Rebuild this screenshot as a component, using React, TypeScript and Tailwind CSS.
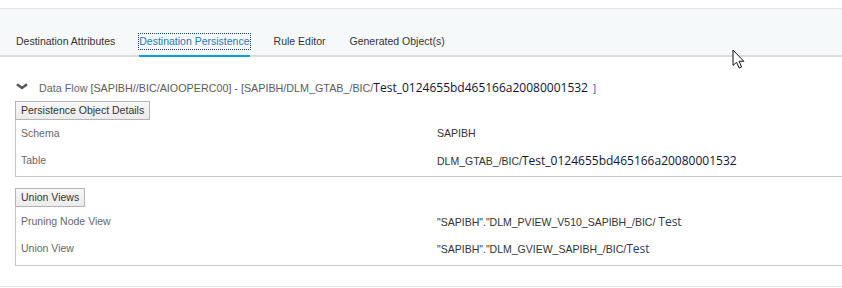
import React from "react";

const sans = "font-['Liberation_Sans',Arial,sans-serif]";
const testFont = "font-['Open_Sans','Noto_Sans',sans-serif] text-[12px]";

function Tab({ label, active }: { label: string; active?: boolean }) {
  return (
    <div
      className={
        "pb-[6px] border-b-2 " +
        (active ? "border-[#0a9ee0]" : "border-transparent")
      }
    >
      <span
        className={
          "block leading-[13px] px-[0px] py-[1px] " +
          (active
            ? "text-[#1e78b6] outline outline-1 outline-dotted outline-[#1a3f66] outline-offset-0"
            : "text-[#333]")
        }
      >
        {label}
      </span>
    </div>
  );
}

function SectionButton({ label }: { label: string }) {
  return (
    <button className="h-[19px] px-[5px] border border-[#b4b4b4] bg-gradient-to-b from-[#f8f8f8] to-[#ebebeb] text-[10.5px] leading-[17px] text-[#333]">
      {label}
    </button>
  );
}

function Row({ label, children }: { label: string; children: React.ReactNode }) {
  return (
    <div className="grid grid-cols-[416px_1fr] h-[27px] items-center">
      <div className="pl-[5px] text-[#666]">{label}</div>
      <div className="pl-[5px] text-[#333] whitespace-nowrap flex items-baseline">{children}</div>
    </div>
  );
}

function Cursor() {
  return (
    <svg
      className="absolute left-[732px] top-[49px]"
      width="14"
      height="21"
      viewBox="0 0 14 21"
    >
      <path
        d="M1 1 L1 16.5 L4.6 13.2 L7.2 19 L9.6 18 L7.1 12.3 L11.8 12.3 Z"
        fill="#fff"
        stroke="#111"
        strokeWidth="1"
        strokeLinejoin="miter"
      />
    </svg>
  );
}

export default function App() {
  return (
    <div className={"relative w-[842px] h-[288px] bg-white overflow-hidden text-[10.5px] " + sans}>
      <div className="h-2" />

      {/* tab strip */}
      <div className="h-[49px] border-t border-[#e4e4e4] border-b-2 border-b-[#dcdcdc] bg-[#f6f9fa] flex items-end">
        <div className="flex gap-6 pl-4 -mb-[2px]">
          <Tab label="Destination Attributes" />
          <Tab label="Destination Persistence" active />
          <Tab label="Rule Editor" />
          <Tab label="Generated Object(s)" />
        </div>
      </div>

      <div className="pl-[15px]">
        {/* data flow title */}
        <div className="mt-[23px] h-4 flex items-center">
          <svg className="ml-[1px] -mt-[4px]" width="12" height="7" viewBox="0 0 12 7">
            <path d="M1 1.2 L6 5 L11 1.2" fill="none" stroke="#555" strokeWidth="2.4" />
          </svg>
          <div className="ml-[11px] whitespace-nowrap flex items-baseline text-[10.75px] text-[#5c5c5c]">
            <span className="text-[#666]">Data Flow&nbsp;</span>
            <span>[SAPIBH//BIC/AIOOPERC00] - [SAPIBH/DLM_GTAB_/BIC/</span>
            <span className={testFont + " text-[#121236]"}>Test_0124655bd465166a20080001532</span>
            <span className="ml-[5px] text-[#2f6fb8] text-[11px]">]</span>
          </div>
        </div>

        {/* persistence object details */}
        <div className="mt-[5px]">
          <SectionButton label="Persistence Object Details" />
        </div>
        <div className="border-l border-b border-[#c9c9c9] pb-[2px]">
          <Row label="Schema">SAPIBH</Row>
          <Row label="Table">
            <span>DLM_GTAB_/BIC/</span>
            <span className={testFont + " text-[#121236]"}>Test_0124655bd465166a20080001532</span>
          </Row>
        </div>

        {/* union views */}
        <div className="mt-[11px]">
          <SectionButton label="Union Views" />
        </div>
        <div className="border-l border-b border-[#c9c9c9] pb-[3px]">
          <div className="h-[1px]" />
          <Row label="Pruning Node View">
            <span>"SAPIBH"."DLM_PVIEW_V510_SAPIBH_/BIC/&nbsp;</span>
            <span className={testFont + " text-[#243d66]"}>Test</span>
          </Row>
          <Row label="Union View">
            <span>"SAPIBH"."DLM_GVIEW_SAPIBH_/BIC/</span>
            <span className={testFont + " text-[#243d66]"}>Test</span>
          </Row>
        </div>
      </div>

      <div className="mt-[20px] border-t border-[#e6e6e6]" />

      <Cursor />
    </div>
  );
}
